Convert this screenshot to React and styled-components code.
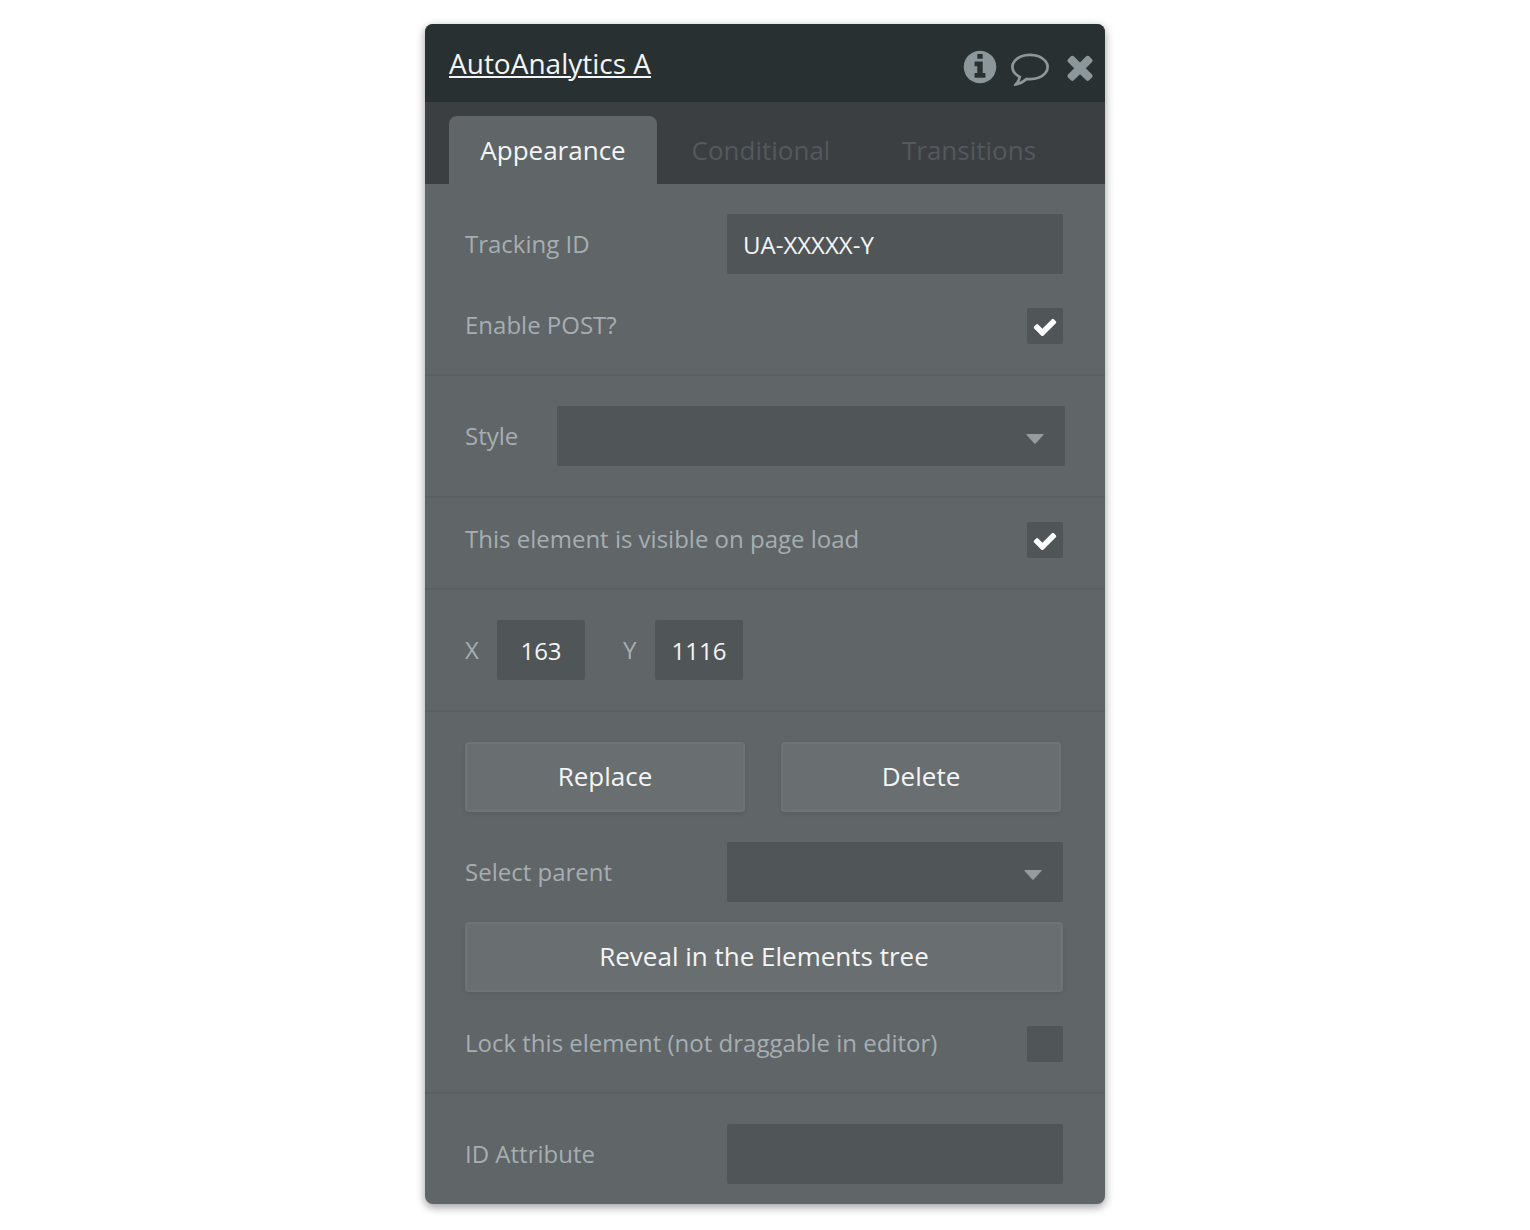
import React, { useState } from 'react';
import styled, { createGlobalStyle } from 'styled-components';

const Global = createGlobalStyle`
  * {
    box-sizing: border-box;
  }

  body {
    margin: 0;
    background: #ffffff;
    font-family: 'Open Sans', 'Noto Sans', sans-serif;
    font-size: 24px;
    line-height: 34px;
  }

  button, input, select {
    font: inherit;
    margin: 0;
  }
`;

const Page = styled.main`
  padding: 24px;
`;

const Panel = styled.section`
  max-width: 680px;
  margin: 0 auto;
  border-radius: 8px;
  overflow: hidden;
  background: #606568;
  box-shadow: 0 3px 10px rgba(0, 0, 0, 0.4);
`;

const Header = styled.header`
  display: flex;
  justify-content: space-between;
  align-items: center;
  height: 78px;
  padding: 8px 6px 0 24px;
  background: #293032;
`;

const Title = styled.a`
  margin-bottom: 8px;
  font-size: 28px;
  line-height: 38px;
  color: #f4f5f5;
  text-decoration: underline;
  text-decoration-thickness: 2px;
  text-underline-offset: 2px;
`;

const HeaderActions = styled.div`
  display: flex;
  gap: 12px;
`;

const IconButton = styled.button`
  display: flex;
  padding: 0;
  border: none;
  background: none;
  color: #8c979b;
  cursor: pointer;
`;

const Icon = styled.svg`
  display: block;
  width: ${props => props.$size || 38}px;
  height: ${props => props.$size || 38}px;
  fill: currentColor;
`;

const TabBar = styled.div`
  display: flex;
  padding: 14px 32px 0 24px;
  background: #3b3f42;
`;

const Tab = styled.button`
  flex: 1;
  height: 68px;
  padding: 0;
  border: none;
  border-radius: 8px 8px 0 0;
  background: ${props => (props.$active ? '#606568' : 'transparent')};
  color: ${props => (props.$active ? '#f4f5f5' : '#53595d')};
  font-size: 26px;
  cursor: pointer;
`;

const Section = styled.div`
  display: flex;
  flex-direction: column;
  padding: ${props => props.$top || 30}px ${props => props.$right || 42}px ${props => props.$bottom || 30}px 40px;
  border-bottom: 2px solid #5b6063;

  &:last-child {
    border-bottom: none;
  }
`;

const Row = styled.div`
  display: flex;
  align-items: ${props => props.$align || 'center'};
  margin-top: ${props => props.$gap || 0}px;
`;

const Label = styled.label`
  flex: ${props => (props.$width ? `0 0 ${props.$width}px` : '1')};
  color: #a6aeb2;
`;

const TextInput = styled.input`
  flex: ${props => (props.$width ? `0 0 ${props.$width}px` : '1')};
  min-width: 0;
  height: 60px;
  padding: 0 ${props => (props.$width ? 0 : 16)}px;
  border: none;
  border-radius: 2px;
  background: #505558;
  color: #f4f5f5;
  text-align: ${props => (props.$width ? 'center' : 'left')};
`;

const Coordinates = styled.div`
  display: flex;
  gap: 38px;
`;

const SelectBox = styled.div`
  position: relative;
  flex: 1;
`;

const Select = styled.select`
  display: block;
  width: 100%;
  height: 60px;
  padding: 0 50px 0 16px;
  appearance: none;
  border: none;
  border-radius: 2px;
  background: #505558;
  color: #f4f5f5;
`;

const Caret = styled.svg`
  position: absolute;
  top: 28px;
  right: 21px;
  width: 18px;
  height: 10px;
  fill: #959b9e;
  pointer-events: none;
`;

const CheckBox = styled.div`
  position: relative;
  width: 36px;
  height: 36px;
`;

const CheckInput = styled.input`
  display: block;
  width: 36px;
  height: 36px;
  appearance: none;
  border-radius: 2px;
  background: #505558;
  cursor: pointer;
`;

const CheckMark = styled.div`
  position: absolute;
  inset: 0;
  display: grid;
  place-items: center;
  padding-top: 2px;
  color: #ffffff;
  pointer-events: none;
`;

const ButtonRow = styled.div`
  display: grid;
  grid-template-columns: 1fr 1fr;
  gap: 36px;
  padding-right: 2px;
`;

const Button = styled.button`
  height: 70px;
  margin-top: ${props => props.$gap || 0}px;
  padding: 0 0 2px;
  border: 2px solid #6e7376;
  border-radius: 4px;
  background: #696e71;
  box-shadow: 0 2px 4px rgba(0, 0, 0, 0.08);
  color: #f4f5f5;
  font-size: 26px;
  cursor: pointer;
`;

const InfoIcon = () => (
  <Icon viewBox="0 0 1792 1792" aria-hidden="true">
    <path d="M1152 1376v-160q0-14-9-23t-23-9h-96v-512q0-14-9-23t-23-9h-320q-14 0-23 9t-9 23v160q0 14 9 23t23 9h96v320h-96q-14 0-23 9t-9 23v160q0 14 9 23t23 9h448q14 0 23-9t9-23zm-128-896v-160q0-14-9-23t-23-9h-192q-14 0-23 9t-9 23v160q0 14 9 23t23 9h192q14 0 23-9t9-23zm640 416q0 209-103 385.5t-279.5 279.5-385.5 103-385.5-103-279.5-279.5-103-385.5 103-385.5 279.5-279.5 385.5-103 385.5 103 279.5 279.5 103 385.5z" />
  </Icon>
);

const CommentIcon = () => (
  <Icon viewBox="0 0 1792 1792" aria-hidden="true">
    <path d="M896 384q-204 0-381.5 69.5t-282 187.5-104.5 255q0 112 71.5 213.5t201.5 175.5l87 50-27 96q-24 91-70 172 152-63 275-171l43-38 57 6q69 8 130 8 204 0 381.5-69.5t282-187.5 104.5-255-104.5-255-282-187.5-381.5-69.5zm896 512q0 174-120 321.5t-326 233-450 85.5q-70 0-145-8-198 175-460 242-49 14-114 22h-5q-15 0-27-10.5t-16-27.5v-1q-3-4-.5-12t2-10 4.5-9.5l6-9 7-8.5 8-9q7-8 31-34.5t34.5-38 31-39.5 32.5-51 27-59 26-76q-157-89-247.5-220t-90.5-281q0-174 120-321.5t326-233 450-85.5 450 85.5 326 233 120 321.5z" />
  </Icon>
);

const CloseIcon = () => (
  <Icon viewBox="0 0 1792 1792" aria-hidden="true">
    <path d="M1490 1322q0 40-28 68l-136 136q-28 28-68 28t-68-28l-294-294-294 294q-28 28-68 28t-68-28l-136-136q-28-28-28-68t28-68l294-294-294-294q-28-28-28-68t28-68l136-136q28-28 68-28t68 28l294 294 294-294q28-28 68-28t68 28l136 136q28 28 28 68t-28 68l-294 294 294 294q28 28 28 68z" />
  </Icon>
);

const Dropdown = ({ id }) => (
  <SelectBox>
    <Select id={id} defaultValue="">
      <option value="" aria-label="None" />
    </Select>
    <Caret viewBox="0 0 18 10" aria-hidden="true">
      <path d="M1 0h16q1 0 .4.9L9.7 9.5q-.7.7-1.4 0L.6.9Q0 0 1 0z" />
    </Caret>
  </SelectBox>
);

const CheckRow = ({ id, label, gap, initial }) => {
  const [checked, setChecked] = useState(Boolean(initial));

  return (
    <Row $gap={gap} $align="flex-start">
      <Label htmlFor={id}>{label}</Label>
      <CheckBox>
        <CheckInput id={id} type="checkbox" checked={checked} onChange={e => setChecked(e.target.checked)} />
        {checked && (
          <CheckMark>
            <Icon $size={26} viewBox="0 0 1792 1792" aria-hidden="true">
              <path d="M1671 566q0 40-28 68l-724 724-136 136q-28 28-68 28t-68-28l-136-136-362-362q-28-28-28-68t28-68l136-136q28-28 68-28t68 28l294 295 656-657q28-28 68-28t68 28l136 136q28 28 28 68z" />
            </Icon>
          </CheckMark>
        )}
      </CheckBox>
    </Row>
  );
};

const tabs = ['Appearance', 'Conditional', 'Transitions'];

const App = () => {
  const [activeTab, setActiveTab] = useState('Appearance');

  return (
    <Page>
      <Global />
      <Panel>
        <Header>
          <Title href="#element">AutoAnalytics A</Title>
          <HeaderActions>
            <IconButton type="button" aria-label="Info">
              <InfoIcon />
            </IconButton>
            <IconButton type="button" aria-label="Comments">
              <CommentIcon />
            </IconButton>
            <IconButton type="button" aria-label="Close">
              <CloseIcon />
            </IconButton>
          </HeaderActions>
        </Header>
        <TabBar role="tablist">
          {tabs.map(tab => (
            <Tab
              key={tab}
              type="button"
              role="tab"
              aria-selected={tab === activeTab}
              $active={tab === activeTab}
              onClick={() => setActiveTab(tab)}
            >
              {tab}
            </Tab>
          ))}
        </TabBar>
        <Section>
          <Row>
            <Label htmlFor="tracking-id" $width={262}>Tracking ID</Label>
            <TextInput id="tracking-id" type="text" defaultValue="UA-XXXXX-Y" />
          </Row>
          <CheckRow id="enable-post" label="Enable POST?" gap={34} initial />
        </Section>
        <Section $right={40}>
          <Row>
            <Label htmlFor="style" $width={92}>Style</Label>
            <Dropdown id="style" />
          </Row>
        </Section>
        <Section $top={24}>
          <CheckRow id="visible" label="This element is visible on page load" initial />
        </Section>
        <Section>
          <Coordinates>
            <Row>
              <Label htmlFor="pos-x" $width={32}>X</Label>
              <TextInput id="pos-x" type="text" $width={88} defaultValue="163" />
            </Row>
            <Row>
              <Label htmlFor="pos-y" $width={32}>Y</Label>
              <TextInput id="pos-y" type="text" $width={88} defaultValue="1116" />
            </Row>
          </Coordinates>
        </Section>
        <Section>
          <ButtonRow>
            <Button type="button">Replace</Button>
            <Button type="button">Delete</Button>
          </ButtonRow>
          <Row $gap={30}>
            <Label htmlFor="parent" $width={262}>Select parent</Label>
            <Dropdown id="parent" />
          </Row>
          <Button type="button" $gap={20}>Reveal in the Elements tree</Button>
          <CheckRow id="lock" label="Lock this element (not draggable in editor)" gap={34} />
        </Section>
        <Section $bottom={20}>
          <Row>
            <Label htmlFor="id-attribute" $width={262}>ID Attribute</Label>
            <TextInput id="id-attribute" type="text" />
          </Row>
        </Section>
      </Panel>
    </Page>
  );
};

export default App;
